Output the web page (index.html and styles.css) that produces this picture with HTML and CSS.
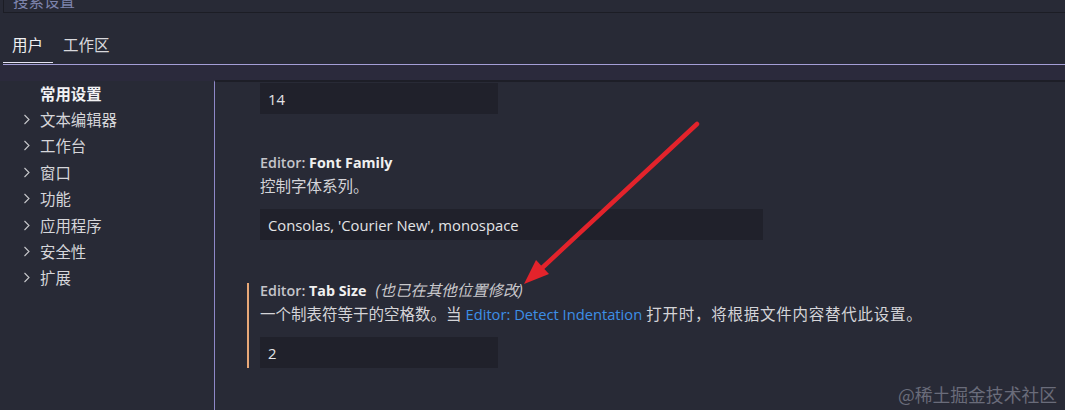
FILE: index.html
```html
<!DOCTYPE html>
<html lang="zh-CN">
<head>
<meta charset="utf-8">
<title>设置</title>
<link rel="stylesheet" href="styles.css">
</head>
<body>
<div class="page">
  <div class="search"><span class="search-ph">搜索设置</span></div>
  <div class="header">
    <div class="tab active">用户</div>
    <div class="tab">工作区</div>
  </div>
  <div class="band"></div>
  <div class="main">
    <nav class="toc">
      <div class="toc-row toc-bold"><span class="chev-space"></span>常用设置</div>
      <div class="toc-row"><svg class="chev" viewBox="0 0 7 11"><path d="M1.5 1 L6 5.5 L1.5 10"/></svg>文本编辑器</div>
      <div class="toc-row"><svg class="chev" viewBox="0 0 7 11"><path d="M1.5 1 L6 5.5 L1.5 10"/></svg>工作台</div>
      <div class="toc-row"><svg class="chev" viewBox="0 0 7 11"><path d="M1.5 1 L6 5.5 L1.5 10"/></svg>窗口</div>
      <div class="toc-row"><svg class="chev" viewBox="0 0 7 11"><path d="M1.5 1 L6 5.5 L1.5 10"/></svg>功能</div>
      <div class="toc-row"><svg class="chev" viewBox="0 0 7 11"><path d="M1.5 1 L6 5.5 L1.5 10"/></svg>应用程序</div>
      <div class="toc-row"><svg class="chev" viewBox="0 0 7 11"><path d="M1.5 1 L6 5.5 L1.5 10"/></svg>安全性</div>
      <div class="toc-row"><svg class="chev" viewBox="0 0 7 11"><path d="M1.5 1 L6 5.5 L1.5 10"/></svg>扩展</div>
    </nav>
    <section class="list">
      <div class="item item-partial">
        <div class="input input-small">14</div>
      </div>
      <div class="item item-2">
        <div class="title"><span class="cat">Editor: </span><span class="label">Font Family</span></div>
        <div class="desc">控制字体系列。</div>
        <div class="input input-wide">Consolas, 'Courier New', monospace</div>
      </div>
      <div class="item item-3 modified">
        <div class="title"><span class="cat">Editor: </span><span class="label">Tab Size</span><span class="other">(也已在其他位置修改)</span></div>
        <div class="desc">一个制表符等于的空格数。当 <span class="link">Editor: Detect Indentation</span> <span class="tail">打开时，将根据文件内容替代此设置。</span></div>
        <div class="input input-small">2</div>
      </div>
    </section>
  </div>
  <svg class="arrow" viewBox="0 0 1065 410" width="1065" height="410">
    <line x1="697" y1="124" x2="542" y2="268" stroke="#e3232b" stroke-width="4.5" stroke-linecap="round"/>
    <polygon points="524,284 549,274 536,260" fill="#e3232b"/>
  </svg>
  <div class="watermark">@稀土掘金技术社区</div>
</div>
</body>
</html>
```

FILE: styles.css
```css
html, body {
  margin: 0;
  padding: 0;
  background: #282a36;
}
.page {
  position: relative;
  width: 1065px;
  height: 410px;
  overflow: hidden;
  background: #282a36;
  font-family: "Open Sans", "Noto Sans CJK SC", sans-serif;
  color: #d4d4d8;
}
.search {
  height: 12px;
  margin-left: 3px;
  border-left: 1px solid #1c1d25;
  border-bottom: 1px solid #1c1d25;
  overflow: hidden;
}
.search-ph {
  display: block;
  margin-top: -9px;
  font-size: 15.5px;
  line-height: 20px;
  color: #7e84ad;
  padding-left: 9px;
}
.header {
  display: flex;
  align-items: flex-end;
  height: 51px;
  margin-left: 3px;
  border-bottom: 1px solid #a49ed6;
}
.tab {
  font-size: 15.5px;
  line-height: 20px;
  padding: 0 10px 7px 10px;
  border-bottom: 1px solid transparent;
  margin-bottom: 1px;
  color: #d8d8dc;
}
.tab.active {
  padding-left: 9px;
  border-bottom-color: #e4e2f2;
  color: #f0f0f2;
}
.band {
  height: 16px;
  background: #2b2a3c;
}
.main {
  display: flex;
  height: 329px;
}
.toc {
  width: 214px;
  margin-top: -1px;
  flex: none;
}
.toc-row {
  display: flex;
  align-items: center;
  height: 26.4px;
  font-size: 15.4px;
  color: #d6d6da;
  padding-left: 23px;
}
.toc-bold {
  font-weight: 700;
  color: #f2f2f4;
}
.chev, .chev-space {
  width: 7px;
  height: 11px;
  margin-right: 10px;
  flex: none;
}
.chev path {
  fill: none;
  stroke: #c8c8cc;
  stroke-width: 1.1;
}
.list {
  flex: 1;
  border-left: 1px solid #8e88c8;
  border-top: 2px solid #1d1e27;
  margin-top: -1px;
  padding-top: 1px;
}
.item {
  margin-left: 32px;
  border-left: 2px solid transparent;
  padding-left: 11px;
}
.item.modified {
  border-left-color: #e8a878;
}
.item-2 {
  margin-top: 41px;
}
.item-3 {
  margin-top: 43px;
}
.title {
  height: 16px;
  line-height: 16px;
  font-size: 14.3px;
  font-weight: 700;
  color: #eeeeee;
  white-space: nowrap;
}
.cat {
  color: #c4c4ca;
  font-weight: 600;
}
.label {
  color: #f0f0f0;
}
.other {
  font-weight: 400;
  font-style: italic;
  font-size: 15.4px;
  color: #c8c8cc;
  margin-left: 9px;
}
.desc {
  margin-top: 4px;
  height: 22px;
  line-height: 22px;
  font-size: 15.5px;
  color: #d4d4d8;
  white-space: nowrap;
}
.link {
  color: #3d8fe6;
  font-size: 14.7px;
}
.tail {
  letter-spacing: 0.75px;
}
.input {
  margin-top: 12px;
  height: 31px;
  line-height: 32px;
  background: #20212b;
  padding-left: 8px;
  font-size: 14.8px;
  color: #e4e4e6;
  box-sizing: border-box;
}
.item-partial .input {
  margin-top: 0;
}
.input-small {
  width: 238px;
}
.input-wide {
  width: 503px;
}
.arrow {
  position: absolute;
  left: 0;
  top: 0;
  pointer-events: none;
}
.watermark {
  position: absolute;
  right: 8px;
  bottom: 5px;
  font-size: 17.8px;
  line-height: 22px;
  color: #6a6c7a;
  font-family: "Noto Sans CJK SC", sans-serif;
}
```
